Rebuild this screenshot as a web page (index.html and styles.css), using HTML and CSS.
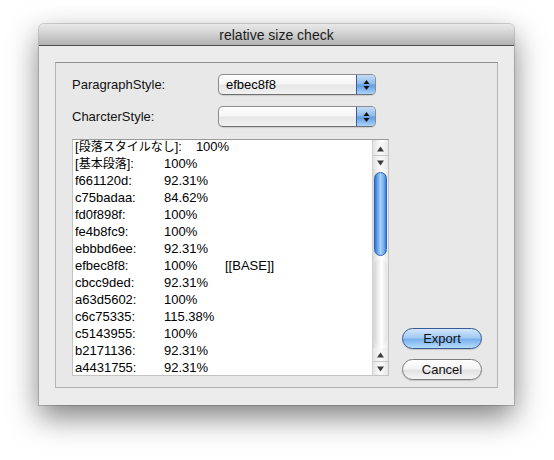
FILE: index.html
```html
<!DOCTYPE html>
<html>
<head>
<meta charset="utf-8">
<link rel="stylesheet" href="styles.css">
</head>
<body>
<div class="screen">
  <div class="window">
    <div class="titlebar">relative size check</div>
    <div class="content">
      <div class="group">
        <div class="field">
          <span class="label">ParagraphStyle:</span>
          <div class="popup">
            <span class="popup-text">efbec8f8</span>
            <span class="popup-arrows">
              <svg width="7" height="12" viewBox="0 0 7 12"><path d="M3.5 1 L6.5 5 L0.5 5 Z" fill="#111"/><path d="M0.5 7 L6.5 7 L3.5 11 Z" fill="#111"/></svg>
            </span>
          </div>
        </div>
        <div class="field field-last">
          <span class="label">CharcterStyle:</span>
          <div class="popup">
            <span class="popup-text"></span>
            <span class="popup-arrows">
              <svg width="7" height="12" viewBox="0 0 7 12"><path d="M3.5 1 L6.5 5 L0.5 5 Z" fill="#111"/><path d="M0.5 7 L6.5 7 L3.5 11 Z" fill="#111"/></svg>
            </span>
          </div>
        </div>
        <div class="main">
          <div class="listbox">
            <div class="list">
              <div class="row"><span class="k k-long">[<span class="ja">段落スタイルなし</span>]:</span><span class="v">100%</span></div>
              <div class="row"><span class="k">[<span class="ja">基本段落</span>]:</span><span class="v">100%</span></div>
              <div class="row"><span class="k">f661120d:</span><span class="v">92.31%</span></div>
              <div class="row"><span class="k">c75badaa:</span><span class="v">84.62%</span></div>
              <div class="row"><span class="k">fd0f898f:</span><span class="v">100%</span></div>
              <div class="row"><span class="k">fe4b8fc9:</span><span class="v">100%</span></div>
              <div class="row"><span class="k">ebbbd6ee:</span><span class="v">92.31%</span></div>
              <div class="row"><span class="k">efbec8f8:</span><span class="v">100%</span><span class="tag">[[BASE]]</span></div>
              <div class="row"><span class="k">cbcc9ded:</span><span class="v">92.31%</span></div>
              <div class="row"><span class="k">a63d5602:</span><span class="v">100%</span></div>
              <div class="row"><span class="k">c6c75335:</span><span class="v">115.38%</span></div>
              <div class="row"><span class="k">c5143955:</span><span class="v">100%</span></div>
              <div class="row"><span class="k">b2171136:</span><span class="v">92.31%</span></div>
              <div class="row"><span class="k">a4431755:</span><span class="v">92.31%</span></div>
            </div>
            <div class="scrollbar">
              <div class="sb-cap"></div>
              <div class="sb-btn"><svg width="7" height="6" viewBox="0 0 7 6"><path d="M3.5 0.5 L7 5.5 L0 5.5 Z" fill="#3c3c3c"/></svg></div>
              <div class="sb-btn sb-btn-sep"><svg width="7" height="6" viewBox="0 0 7 6"><path d="M0 0.5 L7 0.5 L3.5 5.5 Z" fill="#3c3c3c"/></svg></div>
              <div class="sb-track">
                <div class="sb-thumb"></div>
                <div class="sb-rest"></div>
              </div>
              <div class="sb-btn"><svg width="7" height="6" viewBox="0 0 7 6"><path d="M3.5 0.5 L7 5.5 L0 5.5 Z" fill="#3c3c3c"/></svg></div>
              <div class="sb-btn sb-btn-sep"><svg width="7" height="6" viewBox="0 0 7 6"><path d="M0 0.5 L7 0.5 L3.5 5.5 Z" fill="#3c3c3c"/></svg></div>
            </div>
          </div>
          <div class="buttons">
            <button class="btn btn-default">Export</button>
            <button class="btn">Cancel</button>
          </div>
        </div>
      </div>
    </div>
  </div>
</div>
</body>
</html>
```
FILE: styles.css
```css
html, body {
  margin: 0;
  padding: 0;
  background: #ffffff;
}

body {
  font-family: "Liberation Sans", "Noto Sans CJK JP", sans-serif;
  font-size: 13px;
  color: #000;
}

.screen {
  padding: 24px 0 0 39px;
  min-height: 460px;
  box-sizing: border-box;
}

.window {
  width: 475px;
  height: 381px;
  background: #ececec;
  border-radius: 5px 5px 0 0;
  box-shadow: 0 12px 30px rgba(0, 0, 0, 0.5), 0 0 0 1px rgba(0, 0, 0, 0.16);
  display: flex;
  flex-direction: column;
}

.titlebar {
  height: 21px;
  line-height: 23px;
  text-align: center;
  font-size: 14px;
  color: #1c1c1c;
  background: linear-gradient(to bottom, #e9e9e9 0%, #d2d2d2 45%, #b2b2b2 100%);
  border-bottom: 1px solid #4f4f4f;
  border-radius: 5px 5px 0 0;
}

.content {
  flex: 1;
  padding: 16px 16px 17px 16px;
  display: flex;
}

.group {
  flex: 1;
  border: 1px solid #b4b4b4;
  border-top-color: #8f8f8f;
  background: #e8e8e8;
  padding: 11px 0 0 16px;
}

.field {
  display: flex;
  align-items: center;
  height: 21px;
  margin-bottom: 11px;
}

.field-last {
  margin-bottom: 12px;
}

.label {
  width: 146px;
  flex: none;
  color: #111;
}

.popup {
  width: 158px;
  height: 21px;
  box-sizing: border-box;
  border: 1px solid #8c8c8c;
  border-bottom-color: #6f6f6f;
  border-radius: 5px;
  background: linear-gradient(to bottom, #ffffff 0%, #f6f6f6 45%, #e6e6e6 55%, #f2f2f2 100%);
  display: flex;
  overflow: hidden;
  box-shadow: 0 1px 1px rgba(0, 0, 0, 0.12);
}

.popup-text {
  flex: 1;
  padding-left: 7px;
  line-height: 19px;
}

.popup-arrows {
  width: 18px;
  display: flex;
  align-items: center;
  justify-content: center;
  border-left: 1px solid #3a5f9e;
  background: linear-gradient(to bottom, #c4dcf6 0%, #8cbbee 48%, #5d9be3 52%, #a9d3fb 100%);
}

.main {
  display: flex;
  align-items: flex-start;
}

.listbox {
  width: 317px;
  height: 237px;
  box-sizing: border-box;
  border: 1px solid #c4c4c4;
  border-top-color: #9a9a9a;
  background: #fff;
  display: flex;
}

.list {
  flex: 1;
  padding: 0 0 0 2px;
  overflow: hidden;
}

.row {
  display: flex;
  height: 17px;
  line-height: 17px;
  white-space: nowrap;
}

.row:first-child {
  margin-top: -2px;
}

.ja {
  font-size: 12px;
}

.k {
  flex: none;
  min-width: 89px;
}

.k-long {
  margin-right: 14px;
}

.v {
  flex: none;
  min-width: 61px;
}

.scrollbar {
  width: 15px;
  flex: none;
  display: flex;
  flex-direction: column;
  border-left: 1px solid #d0d0d0;
  background: linear-gradient(to right, #d8d8d8 0%, #f2f2f2 30%, #ffffff 60%, #eaeaea 100%);
}

.sb-cap {
  height: 2px;
}

.sb-btn {
  height: 13px;
  display: flex;
  align-items: center;
  justify-content: center;
  background: linear-gradient(to right, #e4e4e4 0%, #fafafa 50%, #e8e8e8 100%);
}

.sb-btn-sep {
  border-top: 1px solid #c8c8c8;
}

.sb-track {
  flex: 1;
  display: flex;
  flex-direction: column;
  padding: 3px 1px 2px 1px;
}

.sb-thumb {
  height: 82px;
  border-radius: 7px;
  border: 1px solid #2d63b8;
  background: linear-gradient(to right, #2f74d6 0%, #6aa8ee 25%, #a9d0f7 50%, #7bb5f1 75%, #3a7edc 100%);
}

.sb-rest {
  flex: 1;
  margin-top: 3px;
  border-radius: 7px;
  background: linear-gradient(to right, #d6d6d6 0%, #f4f4f4 40%, #ffffff 60%, #e2e2e2 100%);
}

.buttons {
  display: flex;
  flex-direction: column;
  gap: 10px;
  padding-top: 189px;
  margin-left: 13px;
}

.btn {
  width: 80px;
  height: 21px;
  box-sizing: border-box;
  border: 1px solid #7c7c7c;
  border-radius: 11px;
  font-family: "Liberation Sans", sans-serif;
  font-size: 13px;
  color: #111;
  padding: 0;
  line-height: 19px;
  background: linear-gradient(to bottom, #ffffff 0%, #f4f4f4 45%, #e2e2e2 55%, #f4f4f4 100%);
  box-shadow: 0 1px 1px rgba(0, 0, 0, 0.15);
}

.btn-default {
  border-color: #3a5c94;
  background: linear-gradient(to bottom, #d2e6fb 0%, #a2cbf3 45%, #79b1ec 55%, #b6dcfb 100%);
}
```
